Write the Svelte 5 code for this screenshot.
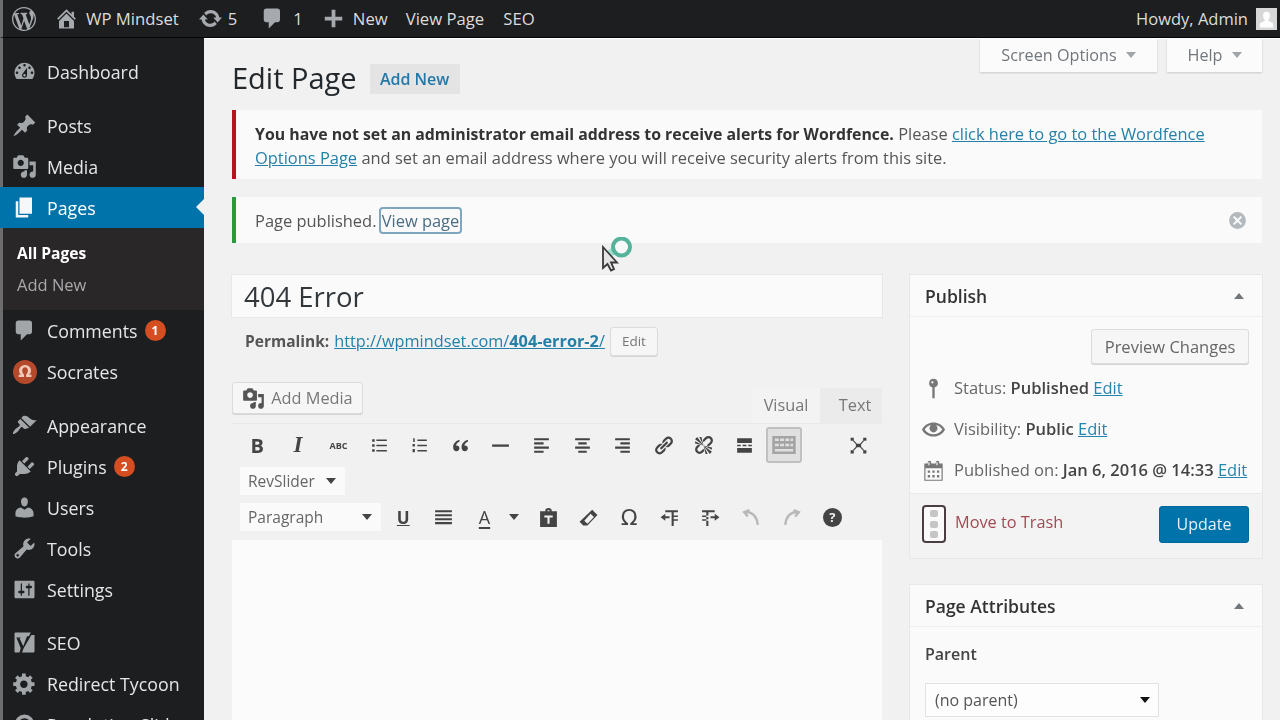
<script>
    const icons = {
        wp: "M20 10c0-5.51-4.49-10-10-10C4.48 0 0 4.49 0 10c0 5.52 4.48 10 10 10 5.51 0 10-4.48 10-10zM7.78 15.37L4.37 6.22c.55-.02 1.17-.08 1.17-.08.5-.06.44-1.13-.06-1.11 0 0-1.45.11-2.37.11-.18 0-.37 0-.58-.01C4.12 2.69 6.87 1.11 10 1.11c2.33 0 4.45.87 6.05 2.34-.68-.11-1.65.39-1.65 1.58 0 .74.45 1.36.9 2.1.35.61.55 1.36.55 2.46 0 1.49-1.4 5-1.4 5l-3.03-8.37c.54-.02.82-.17.82-.17.5-.05.44-1.25-.06-1.22 0 0-1.44.12-2.38.12-.87 0-2.33-.12-2.33-.12-.5-.03-.56 1.2-.06 1.22l.92.08 1.26 3.41zM17.41 10c.24-.64.74-1.87.43-4.25.7 1.29 1.05 2.71 1.05 4.25 0 3.29-1.73 6.24-4.4 7.78.97-2.59 1.94-5.2 2.92-7.78zM6.1 18.09C3.12 16.65 1.11 13.53 1.11 10c0-1.3.23-2.48.72-3.59C3.25 10.3 4.67 14.2 6.1 18.09zm4.03-6.63l2.58 6.98c-.86.29-1.76.45-2.71.45-.79 0-1.57-.11-2.29-.33.81-2.38 1.62-4.74 2.42-7.1z",
        home: "M16 8.5l1.53 1.53-1.06 1.06L10 4.62l-6.47 6.47-1.06-1.06L10 2.5l4 4v-2h2v4zm-6-2.46l6 5.99V18H4v-5.97zM12 17v-5H8v5h4z",
        update: "M10.2 3.28c3.53 0 6.43 2.61 6.92 6h2.08l-3.5 4-3.5-4h2.32c-.45-1.97-2.21-3.45-4.32-3.45-1.45 0-2.73.71-3.54 1.78L4.95 5.66C6.23 4.2 8.11 3.28 10.2 3.28zm-.4 13.44c-3.52 0-6.43-2.61-6.92-6H.8l3.5-4c1.17 1.33 2.33 2.67 3.5 4H5.48c.45 1.97 2.21 3.45 4.32 3.45 1.45 0 2.73-.71 3.54-1.78l1.71 1.95c-1.28 1.46-3.15 2.38-5.25 2.38z",
        comment: "M5 2h9c1.1 0 2 .9 2 2v7c0 1.1-.9 2-2 2h-2l-5 5v-5H5c-1.1 0-2-.9-2-2V4c0-1.1.9-2 2-2z",
        plus: "M17 8.5v3h-5.5V17h-3v-5.5H3v-3h5.5V3h3v5.5H17z",
        dashboard: "M3.76 16h12.48c1.1-1.37 1.76-3.11 1.76-5 0-4.42-3.58-8-8-8s-8 3.58-8 8c0 1.89.66 3.63 1.76 5zM10 4c.55 0 1 .45 1 1s-.45 1-1 1-1-.45-1-1 .45-1 1-1zM6 6c.55 0 1 .45 1 1s-.45 1-1 1-1-.45-1-1 .45-1 1-1zm8 0c.55 0 1 .45 1 1s-.45 1-1 1-1-.45-1-1 .45-1 1-1zm-5.37 5.55L12 7v6c0 1.1-.9 2-2 2s-2-.9-2-2c0-.57.24-1.08.63-1.45zM4 10c.55 0 1 .45 1 1s-.45 1-1 1-1-.45-1-1 .45-1 1-1zm12 0c.55 0 1 .45 1 1s-.45 1-1 1-1-.45-1-1 .45-1 1-1zm-5 3c0-.55-.45-1-1-1s-1 .45-1 1 .45 1 1 1 1-.45 1-1z",
        post: "M10.44 3.02l1.82-1.82 6.36 6.35-1.83 1.82c-1.05-.68-2.48-.57-3.41.36l-.75.75c-.92.93-1.04 2.35-.35 3.41l-1.83 1.82-2.41-2.41-2.8 2.79c-.42.42-3.38 2.71-3.8 2.29s1.86-3.39 2.28-3.81l2.79-2.79L4.1 9.36l1.83-1.82c1.05.69 2.48.57 3.4-.36l.75-.75c.93-.92 1.05-2.35.36-3.41z",
        media: "M13 11V4c0-.55-.45-1-1-1h-1.67L9 1H5L3.67 3H2c-.55 0-1 .45-1 1v7c0 .55.45 1 1 1h10c.55 0 1-.45 1-1zM7 4.5c1.38 0 2.5 1.12 2.5 2.5S8.38 9.5 7 9.5 4.5 8.38 4.5 7 5.62 4.5 7 4.5zM14 6h5v10.5c0 1.38-1.12 2.5-2.5 2.5S14 17.88 14 16.5s1.12-2.5 2.5-2.5c.17 0 .34.02.5.05V9h-3V6zm-4 8.05V13h2v3.5c0 1.38-1.12 2.5-2.5 2.5S7 17.88 7 16.5 8.12 14 9.5 14c.17 0 .34.02.5.05z",
        page: "M6 15V2h10v13H6zm-1 1h8v2H3V5h2v11z",
        appearance: "M14.48 11.06L7.41 3.99l1.5-1.5c.5-.56 2.3-.47 3.51.32 1.21.8 1.43 1.28 2.91 2.1 1.18.64 2.45 1.26 4.45.85zm-.71.71L6.7 4.7 4.93 6.47c-.39.39-.39 1.02 0 1.41l1.06 1.06c.39.39.39 1.03 0 1.42-.6.6-1.43 1.11-2.21 1.69-.35.26-.7.53-1.01.84-1.34 1.34-2.4 3.4-1.98 3.82.41.41 2.48-.65 3.82-1.99.31-.31.58-.66.84-1.01.58-.78 1.09-1.61 1.69-2.21.39-.39 1.03-.39 1.42 0l1.06 1.06c.39.39 1.02.39 1.41 0z",
        plugins: "M13.11 4.36L9.87 7.6 8 5.73l3.24-3.24c.35-.34 1.05-.2 1.56.32.52.51.66 1.21.31 1.55zm-8 1.77l.91-1.12 9.01 9.01-1.19.84c-.71.71-2.63 1.16-3.82 1.16H6.14L4.9 17.26c-.59.59-1.54.59-2.12 0-.59-.58-.59-1.53 0-2.12l1.24-1.24v-3.88c0-1.13.4-3.19 1.09-3.89zm7.26 3.97l3.24-3.24c.34-.35 1.04-.21 1.55.31.52.51.66 1.21.31 1.55l-3.24 3.25z",
        users: "M10 9.25c-2.27 0-2.73-3.44-2.73-3.44C7 4.02 7.82 2 9.97 2c2.16 0 2.98 2.02 2.71 3.81 0 0-.41 3.44-2.68 3.44zm0 2.57L12.72 10c2.39 0 4.52 2.33 4.52 4.53v2.49s-3.65 1.13-7.24 1.13c-3.65 0-7.24-1.13-7.24-1.13v-2.49c0-2.25 1.94-4.48 4.47-4.48z",
        tools: "M16.68 9.77c-1.34 1.34-3.3 1.67-4.95.99l-5.41 6.52c-.99.99-2.59.99-3.58 0s-.99-2.59 0-3.57l6.52-5.42c-.68-1.65-.35-3.61.99-4.95 1.28-1.28 3.12-1.62 4.72-1.06l-2.89 2.89 2.82 2.82 2.86-2.87c.53 1.58.18 3.39-1.08 4.65zM3.81 16.21c.4.39 1.04.39 1.43 0 .4-.4.4-1.04 0-1.43-.39-.4-1.03-.4-1.43 0-.39.39-.39 1.03 0 1.43z",
        settings: "M18 16V4c0-.55-.45-1-1-1H3c-.55 0-1 .45-1 1v12c0 .55.45 1 1 1h14c.55 0 1-.45 1-1zM8 11h1c.55 0 1 .45 1 1s-.45 1-1 1H8v1.5c0 .28-.22.5-.5.5s-.5-.22-.5-.5V13H6c-.55 0-1-.45-1-1s.45-1 1-1h1V5.5c0-.28.22-.5.5-.5s.5.22.5.5V11zm5-2h-1c-.55 0-1-.45-1-1s.45-1 1-1h1V5.5c0-.28.22-.5.5-.5s.5.22.5.5V7h1c.55 0 1 .45 1 1s-.45 1-1 1h-1v5.5c0 .28-.22.5-.5.5s-.5-.22-.5-.5V9z",
        gear: "M18 12h-2.18c-.17.7-.44 1.35-.81 1.93l1.54 1.54-2.1 2.1-1.54-1.54c-.58.36-1.23.63-1.91.79V19H8v-2.18c-.68-.16-1.33-.43-1.91-.79l-1.54 1.54-2.12-2.12 1.54-1.54c-.36-.58-.63-1.23-.79-1.91H1V9.03h2.17c.16-.7.44-1.35.8-1.94L2.43 5.55l2.1-2.1 1.54 1.54c.58-.37 1.24-.64 1.93-.81V2h3v2.18c.68.16 1.33.43 1.91.79l1.54-1.54 2.12 2.12-1.54 1.54c.36.59.64 1.24.8 1.94H18V12zm-8.5 1.5c1.66 0 3-1.34 3-3s-1.34-3-3-3-3 1.34-3 3 1.34 3 3 3z",
        seo: "M3 2h12l-1.5 3H12L9 13 6 6.5 7.5 6H3.5L7 14.5 6 18H3c-.6 0-1-.4-1-1V3c0-.6.4-1 1-1zM15.5 4H18v13c0 .6-.4 1-1 1H8l1.3-3.5z",
        slider: "M10 2a8 8 0 110 16 8 8 0 010-16zm0 3a5 5 0 100 10 5 5 0 000-10z",
        ul: "M3 4h2.4v2.4H3zM7 4.4h10v1.4H7zM3 8.8h2.4v2.4H3zM7 9.3h10v1.4H7zM3 13.6h2.4V16H3zM7 14.2h10v1.4H7z",
        ol: "M4 3h1.4v3.6H4zM8 4.4h9v1.4H8zM3.4 8.6h2.2V11H3.4zM8 9.3h9v1.4H8zM3.4 13.4h2.2v3H3.4zM8 14.2h9v1.4H8z",
        quote: "M9 4.5C5.8 5.6 3 8 3 11.6 3 14 4.4 15.5 6.2 15.5c1.6 0 2.8-1.2 2.8-2.8 0-1.6-1.1-2.7-2.6-2.7-.3 0-.6 0-.8.1.3-1.6 1.6-3 3.6-3.9zm8 0c-3.2 1.1-6 3.5-6 7.1 0 2.4 1.4 3.9 3.2 3.9 1.6 0 2.8-1.2 2.8-2.8 0-1.6-1.1-2.7-2.6-2.7-.3 0-.6 0-.8.1.3-1.6 1.6-3 3.6-3.9z",
        hr: "M2 9h16v2.2H2z",
        alignleft: "M3 3h14v2H3zM3 7h9v2H3zM3 11h14v2H3zM3 15h9v2H3z",
        aligncenter: "M3 3h14v2H3zM6 7h8v2H6zM3 11h14v2H3zM6 15h8v2H6z",
        alignright: "M3 3h14v2H3zM8 7h9v2H8zM3 11h14v2H3zM8 15h9v2H8z",
        link: "M17.74 2.76c1.68 1.69 1.68 4.41 0 6.1l-1.53 1.52c-1.12 1.12-2.7 1.47-4.14 1.09l2.62-2.61.76-.77.76-.76c.84-.84.84-2.2 0-3.04-.84-.85-2.2-.85-3.04 0l-.77.76-3.38 3.38c-.37-1.44-.02-3.02 1.1-4.14l1.52-1.53c1.69-1.68 4.42-1.68 6.1 0zM8.59 13.43l5.34-5.34c.42-.42.42-1.1 0-1.52-.44-.43-1.13-.39-1.53 0l-5.33 5.34c-.42.42-.42 1.1 0 1.52.44.43 1.13.39 1.52 0zm-.76 2.29l4.14-4.15c.38 1.44.03 3.02-1.09 4.14l-1.52 1.53c-1.69 1.68-4.41 1.68-6.1 0-1.68-1.68-1.68-4.42 0-6.1l1.53-1.52c1.12-1.12 2.7-1.47 4.14-1.1l-4.14 4.15c-.85.84-.85 2.2 0 3.05.84.84 2.2.84 3.04 0z",
        unlink: "M17.74 2.26c1.68 1.69 1.68 4.41 0 6.1l-1.53 1.52c-.32.33-.69.58-1.08.77L13 10l1.69-1.64.76-.77.76-.76c.84-.84.84-2.2 0-3.04-.84-.85-2.2-.85-3.04 0l-.77.76-.76.76L10 7l-.65-2.14c.19-.38.44-.75.77-1.07l1.52-1.53c1.69-1.68 4.42-1.68 6.1 0zM2 4l8 6-6-8zm4-2l4 8-2-8H6zM2 6l8 4-8-2V6zm7.36 7.69L10 13l.74 2.35-1.38 1.39c-1.69 1.68-4.41 1.68-6.1 0-1.68-1.68-1.68-4.42 0-6.1l1.39-1.38L7 10l-.69.64-1.52 1.53c-.85.84-.85 2.2 0 3.04.84.85 2.2.85 3.04 0zM18 16l-8-6 6 8zm-4 2l-4-8 2 8h2zm4-4l-8-4 8 2v2z",
        more: "M3 3h14v4.6H3zM3 9.2h3.4v1.6H3zM8.2 9.2h3.6v1.6H8.2zM13.6 9.2H17v1.6h-3.4zM3 12.4h14V17H3z",
        sink: "M1 3h18v14H1zM3 5v2h3V5zm4 0v2h3V5zm4 0v2h3V5zm4 0v2h2V5zM3 9v2h3V9zm4 0v2h3V9zm4 0v2h3V9zm4 0v2h2V9zM3 13v2h14v-2z",
        fullscreen: "M2.5 2.5h3v3h-3zM14.5 2.5h3v3h-3zM2.5 14.5h3v3h-3zM14.5 14.5h3v3h-3zM5.5 5l3 3.4h3l3-3.4.8.8-2.8 3V11.2l2.8 3-.8.8-3-3.4h-3l-3 3.4-.8-.8 2.8-3V8.8l-2.8-3z",
        justify: "M2 3h16v2H2zM2 6.8h16v2H2zM2 10.6h16v2H2zM2 14.4h16v2H2z",
        paste: "M7 4V3c0-1 1-2 3-2s3 1 3 2v1h5v15H2V4zm2-1v1h2V3zM6 8v2h3v6h2v-6h3V8z",
        eraser: "M13.5 2.5l5 5-9.5 10H5L1.5 14zM12 6.5L6 13l3 3 6.2-6.5z",
        outdent: "M6 3h12v2H6zM12 5h2v3h4v1.6h-4v2h4v1.6h-4V18h-2zM1.5 9.8L6 6.5v2.3h4v2H6v2.3z",
        indent: "M2 3h12v2H2zM6 5h2v3H2v1.6h6v2H2v1.6h6V18H6zM18.5 9.8L14 6.5v2.3h-4v2h4v2.3z",
        pin: "M10 1.5a3.8 3.8 0 011 7.47V18.5H9V8.97A3.8 3.8 0 0110 1.5zM9 3.6a1 1 0 100 2 1 1 0 000-2z",
        eye: "M19.7 9.4C17.7 6 14 3.9 10 3.9S2.3 6 .3 9.4L0 10l.3.6c2 3.4 5.7 5.5 9.7 5.5s7.7-2.1 9.7-5.5l.3-.6-.3-.6zM10 14.1c-3.1 0-6-1.6-7.7-4.1C3.6 8 5.7 6.6 8 6.1c-.9.6-1.5 1.7-1.5 2.9 0 1.9 1.6 3.5 3.5 3.5s3.5-1.6 3.5-3.5c0-1.2-.6-2.3-1.5-2.9 2.3.5 4.4 1.9 5.7 3.9-1.7 2.5-4.6 4.1-7.7 4.1z",
        calendar: "M15 4h3v15H2V4h3V3c0-.41.15-.76.44-1.06.29-.29.65-.44 1.06-.44s.77.15 1.06.44c.29.3.44.65.44 1.06v1h4V3c0-.41.15-.76.44-1.06.29-.29.65-.44 1.06-.44s.77.15 1.06.44c.29.3.44.65.44 1.06v1zM6 5.5c.28 0 .5-.22.5-.5V3c0-.28-.22-.5-.5-.5s-.5.22-.5.5v2c0 .28.22.5.5.5zm7 0c.28 0 .5-.22.5-.5V3c0-.28-.22-.5-.5-.5s-.5.22-.5.5v2c0 .28.22.5.5.5zm4 12.5V8H3v10h14zM5 10h2v2H5zm4 0h2v2H9zm4 0h2v2h-2zM5 14h2v2H5zm4 0h2v2H9zm4 0h2v2h-2z",
        dismiss: "M10 2a8 8 0 110 16 8 8 0 010-16zM7 5.6L5.6 7l3 3-3 3L7 14.4l3-3 3 3 1.4-1.4-3-3 3-3L13 5.6l-3 3z",
        avatar: "M10 3c2.4 0 3.6 2 3.3 4.3-.2 1.6-1.2 3.2-1.9 4 .3.8 1.4 1.2 3.4 2 1 .4 1.7 1 1.7 2.2V18H3.5v-2.5c0-1.2.7-1.8 1.7-2.2 2-.8 3.1-1.2 3.4-2-.7-.8-1.7-2.4-1.9-4C6.4 5 7.6 3 10 3z"
    };

    const menu = [
        [{ label: "Dashboard", icon: "dashboard" }],
        [
            { label: "Posts", icon: "post" },
            { label: "Media", icon: "media" },
            { label: "Pages", icon: "page", current: true, sub: ["All Pages", "Add New"] },
            { label: "Comments", icon: "comment", badge: 1 },
            { label: "Socrates", omega: true }
        ],
        [
            { label: "Appearance", icon: "appearance" },
            { label: "Plugins", icon: "plugins", badge: 2 },
            { label: "Users", icon: "users" },
            { label: "Tools", icon: "tools" },
            { label: "Settings", icon: "settings" }
        ],
        [
            { label: "SEO", icon: "seo" },
            { label: "Redirect Tycoon", icon: "gear" },
            { label: "Revolution Slider", icon: "slider" }
        ]
    ];

    const toolbarFirst = ["ul", "ol", "quote", "hr", "alignleft", "aligncenter", "alignright", "link", "unlink", "more"];
    const toolbarThird = ["eraser", "omega", "outdent", "indent"];
</script>

{#snippet icon(name, cls = "")}
    <svg class="icon {cls}" viewBox="0 0 20 20" aria-hidden="true"><path fill-rule="evenodd" d={icons[name]} /></svg>
{/snippet}

<div class="app">
    <header class="adminbar">
        <div class="bar-left">
            <span class="bar-wp">{@render icon("wp", "i-wp")}</span>
            <span class="bar-item site">{@render icon("home", "i-bar")}WP Mindset</span>
            <span class="bar-item updates">{@render icon("update", "i-bar")}5</span>
            <span class="bar-item comments">{@render icon("comment", "i-bar")}1</span>
            <span class="bar-item new">{@render icon("plus", "i-bar")}New</span>
            <span class="bar-item view">View Page</span>
            <span class="bar-item seo">SEO</span>
        </div>
        <div class="bar-right">
            <span>Howdy, Admin</span>
            <span class="avatar">{@render icon("avatar", "i-avatar")}</span>
        </div>
    </header>

    <div class="shell">
        <nav class="sidebar">
            {#each menu as group}
                <ul class="group">
                    {#each group as item}
                        <li class="item" class:current={item.current}>
                            {#if item.omega}
                                <span class="omega-badge">Ω</span>
                            {:else}
                                {@render icon(item.icon, "i-menu")}
                            {/if}
                            <span>{item.label}</span>
                            {#if item.badge}<span class="count">{item.badge}</span>{/if}
                        </li>
                        {#if item.sub}
                            <li class="sub">
                                {#each item.sub as label, i}
                                    <div class="sub-item" class:on={i === 0}>{label}</div>
                                {/each}
                            </li>
                        {/if}
                    {/each}
                </ul>
            {/each}
        </nav>

        <main class="main">
            <div class="screen-meta">
                <span class="meta-tab options">Screen Options <i class="caret"></i></span>
                <span class="meta-tab help">Help <i class="caret"></i></span>
            </div>

            <div class="heading">
                <h1>Edit Page</h1>
                <span class="add-new">Add New</span>
            </div>

            <div class="notice error">
                <p><strong>You have not set an administrator email address to receive alerts for Wordfence.</strong> Please <a href="#top">click here to go to the Wordfence Options Page</a> and set an email address where you will receive security alerts from this site.</p>
            </div>
            <div class="notice success">
                <p>Page published. <span class="focused">View page</span></p>
                {@render icon("dismiss", "i-dismiss")}
            </div>

            <div class="columns">
                <section class="col-main">
                    <div class="title-input">404 Error</div>
                    <div class="permalink">
                        <strong>Permalink:</strong>
                        <a href="#top">http://wpmindset.com/<b>404-error-2</b>/</a>
                        <span class="btn small">Edit</span>
                    </div>

                    <div class="editor-head">
                        <span class="btn add-media">{@render icon("media", "i-addmedia")}Add Media</span>
                        <div class="tabs">
                            <span class="tab active">Visual</span>
                            <span class="tab plain">Text</span>
                        </div>
                    </div>

                    <div class="toolbar">
                        <div class="tool-row">
                            <span class="tool txt-b">B</span>
                            <span class="tool txt-i">I</span>
                            <span class="tool txt-abc">ABC</span>
                            {#each toolbarFirst as name}
                                <span class="tool">{@render icon(name, "i-tool")}</span>
                            {/each}
                            <span class="tool sink">{@render icon("sink", "i-sink")}</span>
                            <span class="tool full">{@render icon("fullscreen", "i-tool")}</span>
                        </div>
                        <div class="tool-row indented">
                            <span class="select rev">RevSlider <i class="caret dark"></i></span>
                        </div>
                        <div class="tool-row indented">
                            <span class="select para">Paragraph <i class="caret dark"></i></span>
                            <span class="tool txt-u">U</span>
                            <span class="tool">{@render icon("justify", "i-tool")}</span>
                            <span class="tool txt-a">A</span>
                            <span class="a-caret"><i class="caret dark"></i></span>
                            <span class="tool">{@render icon("paste", "i-tool")}</span>
                            {#each toolbarThird as name}
                                {#if name === "omega"}
                                    <span class="tool txt-omega">Ω</span>
                                {:else}
                                    <span class="tool">{@render icon(name, "i-tool")}</span>
                                {/if}
                            {/each}
                            <span class="tool">
                                <svg class="icon i-tool faded" viewBox="0 0 20 20" aria-hidden="true"><path d="M8 3L3 5l3.5 4M3.5 5c7-.5 11.5 3.5 12.5 12" fill="none" stroke-width="2.2" /></svg>
                            </span>
                            <span class="tool">
                                <svg class="icon i-tool faded" viewBox="0 0 20 20" aria-hidden="true"><path d="M12 3l5 2-3.5 4M16.5 5c-7-.5-11.5 3.5-12.5 12" fill="none" stroke-width="2.2" /></svg>
                            </span>
                            <span class="tool"><span class="help-dot">?</span></span>
                        </div>
                    </div>
                    <div class="editor-body"></div>
                </section>

                <aside class="col-side">
                    <section class="box publish">
                        <header class="box-head">Publish <i class="caret up"></i></header>
                        <div class="preview-row"><span class="btn preview">Preview Changes</span></div>
                        <div class="misc">{@render icon("pin", "i-misc")}<span>Status: <b>Published</b> <a href="#top">Edit</a></span></div>
                        <div class="misc">{@render icon("eye", "i-misc")}<span>Visibility: <b>Public</b> <a href="#top">Edit</a></span></div>
                        <div class="misc">{@render icon("calendar", "i-misc")}<span>Published on: <b>Jan 6, 2016 @ 14:33</b> <a href="#top">Edit</a></span></div>
                        <footer class="major">
                            <span class="trash-mark"><i></i><i></i><i></i></span>
                            <a class="trash" href="#top">Move to Trash</a>
                            <span class="update">Update</span>
                        </footer>
                    </section>

                    <section class="box attrs">
                        <header class="box-head">Page Attributes <i class="caret up"></i></header>
                        <div class="attrs-body">
                            <strong>Parent</strong>
                            <span class="parent-select">(no parent) <i class="caret black"></i></span>
                        </div>
                    </section>
                </aside>
            </div>
        </main>
    </div>

    <div class="pointer" aria-hidden="true">
        <svg viewBox="0 0 34 36" width="34" height="36">
            <path d="M8 18l9-7" stroke="#7fd6c0" stroke-width="7" opacity=".7" />
            <path d="M3 10v21l4.5-4 3.5 6.5 3-1.5-3-6.5h6z" fill="#e4e4e4" stroke="#3a3a3a" stroke-width="1.8" />
            <circle cx="21.5" cy="10" r="8.5" fill="#f6f9f8" stroke="#55b39c" stroke-width="4" />
        </svg>
    </div>
</div>

<style>
    :global(body) {
        margin: 0;
        background: #f1f1f1;
        overflow: hidden;
    }
    .app {
        position: relative;
        width: 1280px;
        height: 720px;
        overflow: hidden;
        font-family: "Open Sans", sans-serif;
        font-size: 16.45px;
        color: #444;
        filter: blur(0.6px);
    }
    .icon {
        display: block;
        flex: none;
        fill: currentColor;
    }
    a {
        color: #0073aa;
    }

    /* admin bar */
    .adminbar {
        height: 37px;
        border-bottom: 1px solid #050505;
        border-left: 3px solid #6d6d6d;
        background: #1c1e20;
        color: #dcdcdc;
        display: flex;
        justify-content: space-between;
        align-items: center;
        font-size: 16.7px;
    }
    .bar-left,
    .bar-right,
    .bar-item {
        display: flex;
        align-items: center;
    }
    .bar-wp {
        color: #a6a9ad;
        margin-left: 9px;
    }
    .i-wp {
        width: 24px;
        height: 24px;
    }
    .i-bar {
        width: 25px;
        height: 25px;
        color: #a6a9ad;
    }
    .site {
        margin-left: 18px;
        gap: 7px;
    }
    .updates {
        margin-left: 19px;
        gap: 5px;
    }
    .comments {
        margin-left: 23px;
        gap: 8px;
    }
    .new {
        margin-left: 18px;
        gap: 7px;
    }
    .view {
        margin-left: 18px;
    }
    .seo {
        margin-left: 19px;
    }
    .bar-right {
        gap: 8px;
        margin-right: 3px;
        font-size: 16.5px;
    }
    .avatar {
        width: 21px;
        height: 22px;
        background: #d8d8d8;
        color: #fdfdfd;
    }
    .i-avatar {
        width: 21px;
        height: 22px;
    }

    /* sidebar */
    .shell {
        display: flex;
        height: 682px;
    }
    .sidebar {
        flex: none;
        width: 201px;
        border-left: 3px solid #6d6d6d;
        background: #1c1e20;
        padding-top: 13px;
    }
    .group {
        list-style: none;
        margin: 0 0 13px;
        padding: 0;
    }
    .group:nth-child(3) {
        margin-bottom: 12px;
    }
    .item {
        position: relative;
        height: 41px;
        display: flex;
        align-items: center;
        padding-left: 9px;
        color: #e6e6e6;
        font-size: 17.8px;
    }
    .i-menu {
        width: 25px;
        height: 25px;
        color: #a3a6a9;
        margin-right: 10px;
    }
    .omega-badge {
        width: 24px;
        height: 24px;
        margin-right: 10px;
        margin-left: 1px;
        border-radius: 50%;
        background: #b5492c;
        color: #eecbb9;
        font: bold 16px/24px "DejaVu Sans", sans-serif;
        text-align: center;
    }
    .count {
        width: 21px;
        height: 21px;
        margin-left: 7px;
        border-radius: 50%;
        background: #d54e21;
        color: #fff;
        font-size: 12px;
        font-weight: 700;
        line-height: 21px;
        text-align: center;
    }
    .item.current {
        margin-left: -3px;
        padding-left: 12px;
        background: #0073aa;
        color: #fff;
    }
    .item.current .i-menu {
        color: #f4f8fa;
    }
    .item.current::after {
        content: "";
        position: absolute;
        right: 0;
        top: 12px;
        border: 8px solid transparent;
        border-left-width: 0;
        border-right-color: #f1f1f1;
    }
    .sub {
        padding: 9px 0;
        background: #2a2729;
    }
    .sub-item {
        height: 32px;
        line-height: 32px;
        padding-left: 14px;
        font-size: 16.5px;
        color: #a9a9ab;
    }
    .sub-item.on {
        color: #fff;
        font-size: 15.6px;
        font-weight: 700;
    }

    /* main */
    .main {
        flex: 1;
        min-width: 0;
        padding: 0 18px 0 28px;
        border-top: 1px solid #fff;
    }
    .screen-meta {
        display: flex;
        justify-content: flex-end;
        gap: 10px;
        height: 33px;
        margin-bottom: -8px;
    }
    .meta-tab {
        display: flex;
        align-items: center;
        justify-content: center;
        gap: 9px;
        padding-bottom: 2px;
        box-sizing: border-box;
        background: #fbfbfb;
        box-shadow: 0 1px 2px #0000002b;
        color: #72777c;
        font-size: 16.2px;
    }
    .options {
        width: 177px;
    }
    .help {
        width: 95px;
    }
    .caret {
        display: inline-block;
        width: 0;
        height: 0;
        border: 5px solid transparent;
        border-top: 6px solid #a0a5aa;
        border-bottom: 0;
    }
    .caret.dark {
        border-top-color: #444;
    }
    .caret.black {
        border-top-color: #111;
    }
    .caret.up {
        border-top: 0;
        border-bottom: 6px solid #72777c;
    }
    .heading {
        display: flex;
        align-items: center;
        gap: 13px;
        height: 30px;
        margin-bottom: 16px;
    }
    h1 {
        margin: -4px 0 0;
        font-size: 29px;
        font-weight: 400;
        color: #23282d;
    }
    .add-new {
        width: 90px;
        height: 30px;
        line-height: 30px;
        text-align: center;
        background: #e4e4e4;
        color: #2478a8;
        font-size: 16px;
        font-weight: 600;
    }
    .notice {
        display: flex;
        align-items: center;
        justify-content: space-between;
        box-sizing: border-box;
        border-left: 4px solid;
        background: #fafafa;
        padding: 0 14px 0 19px;
        margin-bottom: 18px;
    }
    .notice p {
        margin: 0;
        line-height: 23px;
        color: #555;
    }
    .notice strong {
        font-size: 15.85px;
        color: #333;
    }
    .notice a {
        color: #2580a8;
    }
    .error {
        height: 69px;
        padding-top: 2px;
        border-color: #b3141d;
    }
    .success {
        height: 46px;
        border-color: #2a9a3a;
        margin-bottom: 32px;
    }
    .focused {
        outline: 2px solid #7fa6bf;
        border-radius: 2px;
        color: #4a6d82;
        padding: 0 1px;
    }
    .i-dismiss {
        width: 21px;
        height: 21px;
        color: #b4b9be;
    }
    .columns {
        display: grid;
        grid-template-columns: 650px 352px;
        gap: 28px;
        align-items: start;
    }

    /* title + editor */
    .title-input {
        height: 42px;
        box-sizing: border-box;
        padding-left: 12px;
        line-height: 43px;
        background: #fafafa;
        box-shadow: 0 0 0 1px #e8e8e8;
        color: #32373c;
        font-size: 27.5px;
    }
    .permalink {
        display: flex;
        align-items: center;
        gap: 4px;
        height: 29px;
        margin: 10px 0 26px 13px;
        font-size: 15.5px;
        line-height: 27px;
    }
    .permalink strong {
        color: #555;
        margin-right: 1px;
        padding-bottom: 1px;
    }
    .permalink a {
        font-size: 16.3px;
        color: #2580a8;
        margin-right: 1px;
        padding-bottom: 1px;
    }
    .btn {
        box-sizing: border-box;
        border: 1px solid #dcdcdc;
        border-radius: 3px;
        background: #f6f6f6;
        box-shadow: 0 1px 0 #d4d4d4;
        color: #777;
        display: flex;
        align-items: center;
        justify-content: center;
    }
    .btn.small {
        width: 48px;
        height: 29px;
        font-size: 13.5px;
    }
    .editor-head {
        display: flex;
        justify-content: space-between;
        height: 41px;
    }
    .add-media {
        width: 131px;
        height: 32px;
        gap: 6px;
        font-size: 16.3px;
        color: #777;
    }
    .i-addmedia {
        width: 23px;
        height: 23px;
        color: #555;
    }
    .tabs {
        display: flex;
        align-self: flex-end;
        height: 35px;
    }
    .tab {
        display: flex;
        align-items: center;
        justify-content: center;
        box-sizing: border-box;
        width: 62px;
        padding-bottom: 2px;
        background: #ebebeb;
        color: #777;
        font-size: 16.3px;
    }
    .tab.active {
        width: 68px;
        background: #f3f3f3;
    }
    .tab.plain {
        padding-left: 8px;
    }
    .toolbar {
        height: 117px;
        box-sizing: border-box;
        background: #f1f1f1;
        border-top: 1px solid #e9e9e9;
        padding: 3px 0 0 5px;
    }
    .tool-row {
        display: flex;
        align-items: center;
        height: 36px;
    }
    .indented {
        padding-left: 3px;
    }
    .tool {
        flex: none;
        width: 40.6px;
        height: 36px;
        display: flex;
        align-items: center;
        justify-content: center;
        color: #444;
        font-size: 20px;
    }
    .i-tool {
        width: 21px;
        height: 21px;
    }
    .i-sink {
        width: 26px;
        height: 26px;
    }
    .faded {
        stroke: #b8b8b8;
        fill: none;
    }
    .txt-b {
        font-weight: 700;
    }
    .txt-i {
        font-family: "Liberation Serif", serif;
        font-style: italic;
        font-weight: 700;
        font-size: 23px;
    }
    .txt-abc {
        font-size: 9px;
        font-weight: 700;
    }
    .txt-u {
        font-size: 17px;
        font-weight: 700;
        text-decoration: underline;
    }
    .txt-a {
        font-size: 18px;
        text-decoration: underline;
        text-decoration-thickness: 2px;
        text-underline-offset: 3px;
    }
    .txt-omega {
        font: 400 22px "DejaVu Sans", sans-serif;
    }
    .a-caret {
        flex: none;
        width: 23px;
        display: flex;
        justify-content: center;
        padding-right: 4px;
        box-sizing: border-box;
    }
    .sink {
        width: 36px;
        margin: 0 2.6px 0 1.6px;
        box-sizing: border-box;
        border: 2px solid #c0c0c0;
        border-radius: 3px;
        color: #a4a4a4;
        background: #e0e0e0;
    }
    .full {
        margin-left: 33px;
    }
    .select {
        display: flex;
        align-items: center;
        justify-content: space-between;
        box-sizing: border-box;
        height: 28px;
        padding: 0 9px 0 8px;
        background: #fafafa;
        color: #666;
        font-size: 15.5px;
    }
    .rev {
        width: 105px;
    }
    .para {
        width: 141px;
        margin-right: 2px;
    }
    .help-dot {
        width: 19px;
        height: 19px;
        border-radius: 50%;
        background: #444;
        color: #f1f1f1;
        font-size: 13px;
        font-weight: 700;
        line-height: 19px;
        text-align: center;
    }
    .editor-body {
        height: 200px;
        background: #fbfbfb;
    }

    /* side boxes */
    .box {
        background: #fafafa;
        box-shadow: 0 0 0 1px #e8e8e8;
    }
    .box-head {
        display: flex;
        align-items: center;
        justify-content: space-between;
        height: 42px;
        box-sizing: border-box;
        padding: 0 18px 0 15px;
        border-bottom: 1px solid #eee;
        color: #333;
        font-size: 17.5px;
        font-weight: 600;
    }
    .preview-row {
        display: flex;
        justify-content: flex-end;
        padding: 12px 13px 4px 0;
    }
    .preview {
        width: 158px;
        height: 35px;
        font-size: 16.5px;
        color: #666;
    }
    .misc {
        display: flex;
        align-items: center;
        height: 41px;
        padding-left: 12px;
        font-size: 16.5px;
        color: #666;
    }
    .misc span {
        padding-bottom: 2px;
    }
    .misc b {
        font-weight: 600;
        color: #444;
    }
    .misc a {
        color: #2585b0;
    }
    .i-misc {
        width: 23px;
        height: 23px;
        margin-right: 9px;
        color: #777;
    }
    .major {
        display: flex;
        align-items: flex-start;
        height: 65px;
        box-sizing: border-box;
        margin-top: 2px;
        padding: 11px 13px 0 12px;
        background: #f3f3f3;
        border-top: 1px solid #e9e9e9;
    }
    .trash-mark {
        display: flex;
        flex-direction: column;
        align-items: center;
        justify-content: space-evenly;
        box-sizing: border-box;
        width: 24px;
        height: 38px;
        border: 2px solid #4a3d44;
        border-radius: 4px;
        background: #fafafa;
    }
    .trash-mark i {
        width: 8px;
        height: 7px;
        border-radius: 2px;
        background: #c6c6c6;
    }
    .trash {
        margin: 6px 0 0 9px;
        line-height: 22px;
        color: #a04a52;
        font-size: 16.3px;
        text-decoration: none;
    }
    .update {
        margin: 1px 0 0 auto;
        width: 90px;
        height: 37px;
        line-height: 35px;
        text-align: center;
        box-sizing: border-box;
        border: 1px solid #006799;
        border-radius: 3px;
        background: #0073aa;
        color: #e4f1f7;
        font-size: 16px;
    }
    .attrs {
        margin-top: 27px;
        height: 220px;
    }
    .attrs-body {
        padding: 16px 15px;
        color: #444;
        font-size: 16px;
    }
    .attrs-body strong {
        display: block;
        font-weight: 600;
    }
    .parent-select {
        display: flex;
        align-items: center;
        justify-content: space-between;
        box-sizing: border-box;
        width: 234px;
        height: 34px;
        margin-top: 18px;
        padding: 0 8px 0 9px;
        border: 1px solid #e2e2e2;
        background: #fdfdfd;
        color: #555;
        font-size: 16px;
    }

    /* captured mouse pointer */
    .pointer {
        position: absolute;
        left: 600px;
        top: 237px;
        width: 34px;
        height: 36px;
    }
</style>
